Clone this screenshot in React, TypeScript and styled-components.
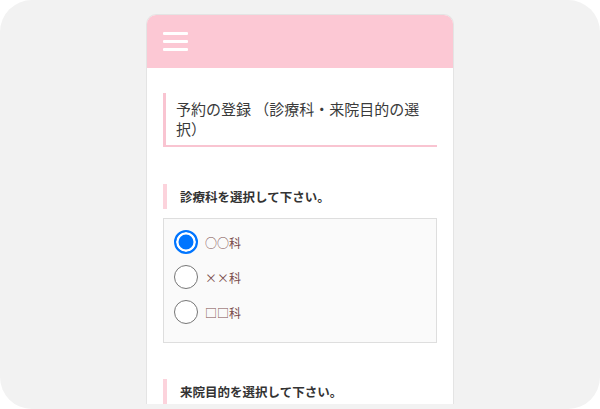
import styled, { createGlobalStyle } from 'styled-components';

const GlobalStyle = createGlobalStyle`
  html, body {
    margin: 0;
    padding: 0;
    background: #ffffff;
  }
  body {
    font-family: "Noto Sans CJK JP", "Noto Sans", sans-serif;
  }
  * {
    box-sizing: border-box;
  }
`;

/* gray rounded canvas behind the phone preview */
const Stage = styled.div`
  width: 600px;
  height: 409px;
  background: #f2f2f2;
  border-radius: 32px;
  overflow: hidden;
  display: flex;
  justify-content: center;
  align-items: flex-start;
  padding-top: 14px;
`;

const Phone = styled.div`
  width: 308px;
  flex-shrink: 0;
  background: #ffffff;
  border: 1px solid #e4e4e4;
  border-bottom: none;
  border-radius: 10px 10px 0 0;
  overflow: hidden;
`;

const Header = styled.header`
  height: 53px;
  background: #fcc8d4;
  display: flex;
  align-items: center;
  padding: 0 16px;
`;

const Burger = styled.div`
  display: flex;
  flex-direction: column;
  gap: 5px;
  width: 25px;

  span {
    display: block;
    height: 3px;
    border-radius: 1px;
    background: #ffffff;
  }
`;

const Content = styled.main`
  padding: 25px 16px 0;
  display: flex;
  flex-direction: column;
`;

const PageTitle = styled.h1`
  margin: 0;
  padding: 6px 10px 6px 10px;
  border-left: 3px solid #f9c4d1;
  border-bottom: 2px solid #f9c4d1;
  font-size: 15px;
  font-weight: 400;
  line-height: 20px;
  color: #3a3a3a;
`;

const SectionHeading = styled.h2<{ $gap: number }>`
  margin: ${({ $gap }) => $gap}px 0 0;
  padding: 0 0 0 13px;
  height: 25px;
  display: flex;
  align-items: center;
  border-left: 4px solid #fcd3dc;
  font-size: 12.5px;
  font-weight: 700;
  color: #333333;
`;

const ChoiceBox = styled.div`
  margin-top: 9px;
  border: 1px solid #dedede;
  background: #fafafa;
  padding: 11px 10px 18px;
  display: flex;
  flex-direction: column;
  gap: 11px;
`;

const Choice = styled.label`
  display: flex;
  align-items: center;
  gap: 7px;
  height: 24px;
  font-size: 12px;
  color: #7a4c4c;
`;

const Radio = styled.input.attrs({ type: 'radio' })`
  appearance: none;
  margin: 0;
  width: 24px;
  height: 24px;
  border-radius: 50%;
  border: 1px solid #767676;
  background: #ffffff;

  &:checked {
    border: 2px solid #0075ff;
    background: #0075ff;
    box-shadow: inset 0 0 0 2.5px #ffffff;
  }
`;

const departments = ['○○科', '××科', '□□科'];

export default function App() {
  return (
    <>
      <GlobalStyle />
      <Stage>
        <Phone>
          <Header>
            <Burger>
              <span />
              <span />
              <span />
            </Burger>
          </Header>

          <Content>
            <PageTitle>予約の登録 （診療科・来院目的の選択）</PageTitle>

            <SectionHeading $gap={37}>診療科を選択して下さい。</SectionHeading>
            <ChoiceBox>
              {departments.map((d, i) => (
                <Choice key={d}>
                  <Radio name="dept" defaultChecked={i === 0} />
                  {d}
                </Choice>
              ))}
            </ChoiceBox>

            <SectionHeading $gap={36}>来院目的を選択して下さい。</SectionHeading>
          </Content>
        </Phone>
      </Stage>
    </>
  );
}
